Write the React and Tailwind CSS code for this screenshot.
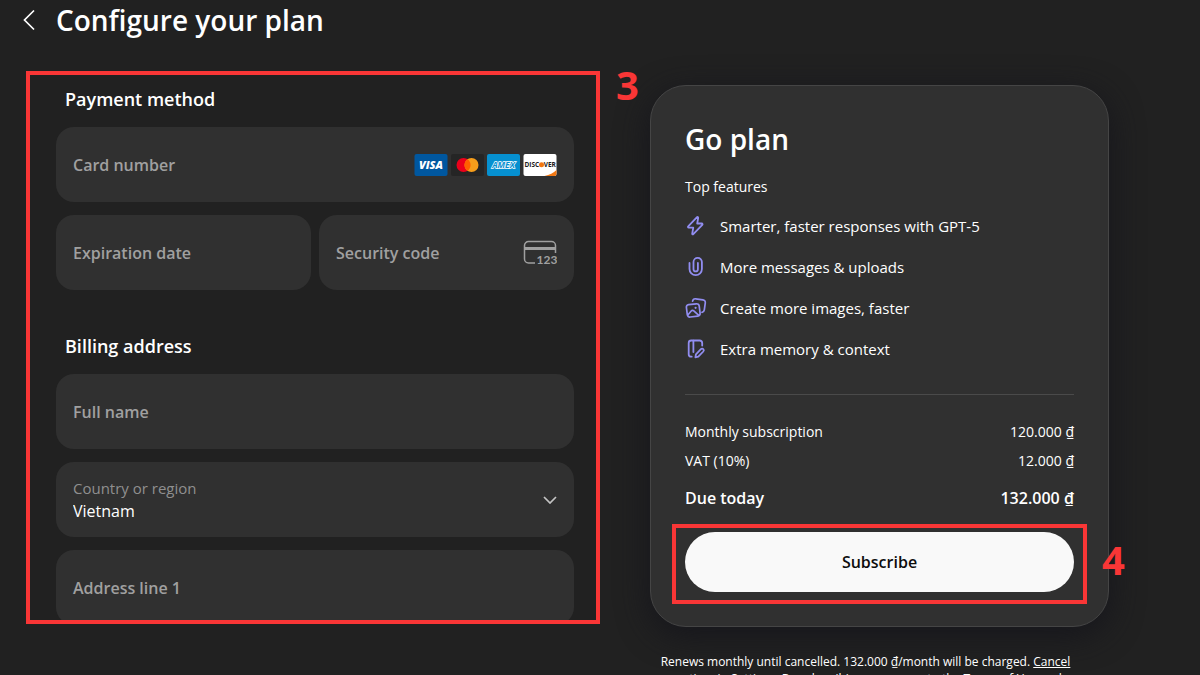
import { useState } from "react";

const features = [
  { icon: BoltIcon, text: "Smarter, faster responses with GPT-5" },
  { icon: ClipIcon, text: "More messages & uploads" },
  { icon: ImagesIcon, text: "Create more images, faster" },
  { icon: MemoryIcon, text: "Extra memory & context" },
];

function BoltIcon() {
  return (
    <svg viewBox="0 0 22 22" className="w-[22px] h-[22px]" fill="none" stroke="currentColor" strokeWidth="1.8" strokeLinejoin="round" strokeLinecap="round">
      <path d="M12 2.2 3.2 11.4c-.5.5-.2 1.3.5 1.3h4.6L7.2 18.6c-.1.7.6 1.1 1.1.6l9-9.4c.5-.5.2-1.3-.5-1.3h-4.6l1-5.700c.1-.8-.7-1.100-1.200-.6Z" />
    </svg>
  );
}

function ClipIcon() {
  return (
    <svg viewBox="0 0 22 22" className="w-[22px] h-[22px]" fill="none" stroke="currentColor" strokeWidth="1.8" strokeLinecap="round">
      <path d="M4.500 7v6a6.200 6.200 0 0 0 12.400 0V6a4.200 4.200 0 0 0-8.400 0v7.200a2.200 2.200 0 0 0 4.400 0V7" />
    </svg>
  );
}

function ImagesIcon() {
  return (
    <svg viewBox="0 0 22 22" className="w-[22px] h-[22px]" fill="none" stroke="currentColor" strokeWidth="1.7" strokeLinecap="round" strokeLinejoin="round">
      <path d="M7.600 4.200c.3-1.600 1.500-2.600 3.100-2.400l7.200 1c1.600.2 2.600 1.500 2.400 3.100l-1 7c-.2 1.400-1 2.300-2.300 2.500" />
      <path d="M3.600 7.700l7.700-.9c1.500-.2 2.700.7 2.900 2.200l.9 7.200c.2 1.500-.8 2.700-2.300 2.900l-7.600.9c-1.500.2-2.700-.8-2.900-2.300l-.9-7.200c-.2-1.500.7-2.600 2.200-2.800Z" />
      <path d="M2.800 18l3.400-4c.7-.8 1.800-.8 2.600-.1l4.700 4.300" />
      <circle cx="10.600" cy="10.800" r="1.100" fill="currentColor" stroke="none" />
    </svg>
  );
}

function MemoryIcon() {
  return (
    <svg viewBox="0 0 22 22" className="w-[22px] h-[22px]" fill="none" stroke="currentColor" strokeWidth="1.8" strokeLinecap="round" strokeLinejoin="round">
      <path d="M17.200 7.600V5c0-1.500-1-2.500-2.500-2.500H6.200C4.700 2.500 3.700 3.500 3.700 5v11.200c0 1.500 1 2.500 2.500 2.500h.5" />
      <path d="M8.400 2.600v11.500" />
      <path d="M10.400 19.300l.5-3 5-5.200c.7-.7 1.800-.7 2.400 0 .7.7.6 1.700 0 2.400l-5 5.200Z" />
    </svg>
  );
}

function CardBrands() {
  return (
    <div className="flex shrink-0 gap-[3px]">
      <svg viewBox="0 0 33 22" className="w-[34px] h-[22px]">
        <rect width="33" height="22" rx="2" fill="#00579f" />
        <text x="16.500" y="15" textAnchor="middle" fontFamily="Open Sans" fontSize="11" fontWeight="800" fontStyle="italic" fill="#fff">VISA</text>
      </svg>
      <svg viewBox="0 0 33 22" className="w-[33px] h-[22px]">
        <rect width="33" height="22" rx="2" fill="#252525" />
        <circle cx="12.500" cy="11" r="7" fill="#eb001b" />
        <circle cx="20.500" cy="11" r="7" fill="#f79e1b" />
        <path d="M16.500 5.200a7 7 0 0 1 0 11.600a7 7 0 0 1 0-11.600Z" fill="#ff5f00" />
      </svg>
      <svg viewBox="0 0 33 22" className="w-[33px] h-[22px]">
        <rect width="33" height="22" rx="2" fill="#0690d0" />
        <text x="16.500" y="14" textAnchor="middle" fontFamily="Open Sans" fontSize="8.500" fontWeight="700" fontStyle="italic" fill="#0690d0" stroke="#fff" strokeWidth="1.400" paintOrder="stroke">AMEX</text>
      </svg>
      <svg viewBox="0 0 33 22" className="w-[34px] h-[22px]">
        <rect width="33" height="22" rx="2" fill="#fff" />
        <path d="M33 16v4a2 2 0 0 1-2 2H21c5-1 9-3 12-6Z" fill="#f27712" />
        <text x="1" y="13" fontFamily="Open Sans" fontSize="6.500" fontWeight="700" fill="#1a1a1a">DISC</text>
        <circle cx="18" cy="10.700" r="2.500" fill="#f27712" />
        <text x="20.200" y="13" fontFamily="Open Sans" fontSize="6.500" fontWeight="700" fill="#1a1a1a">VER</text>
      </svg>
    </div>
  );
}

function SecurityCodeIcon() {
  return (
    <svg viewBox="0 0 34 26" className="w-[34px] h-[26px] shrink-0 text-[#a0a0a0]" fill="none" stroke="currentColor" strokeWidth="1.500">
      <path d="M12 23H5.500A4 4 0 0 1 1.500 19V5.500A4 4 0 0 1 5.500 1.500H28.500A4 4 0 0 1 32.500 5.500V13" />
      <path d="M1.500 8.500H32.500" strokeWidth="3" />
      <text x="13.500" y="23.500" fontFamily="Lato" fontSize="12" fontWeight="700" fill="currentColor" stroke="none">123</text>
    </svg>
  );
}

function Field({ label, children }) {
  return (
    <label className="flex h-[75px] min-w-0 items-center gap-3 rounded-[18px] bg-[#303030] px-[17px]">
      <span className="shrink-0 text-[16px] leading-6 font-semibold text-[#a0a0a0]">
        {label}
      </span>
      <input
        type="text"
        className="w-0 min-w-0 flex-1 bg-transparent text-[16px] text-white outline-none"
      />
      {children}
    </label>
  );
}

export default function App() {
  const [country, setCountry] = useState("Vietnam");

  return (
    <div className="h-screen overflow-hidden bg-[#212121] font-['Open_Sans',sans-serif] text-white">
      <header className="flex h-10 items-center gap-4 pl-[18px]">
        <button type="button" aria-label="Back" className="flex w-[22px] justify-center">
          <svg viewBox="0 0 12 22" className="h-[22px] w-3" fill="none" stroke="currentColor" strokeWidth="1.700">
            <path d="M11 1.500 1.500 11l9.500 9.500" />
          </svg>
        </button>
        <h1 className="text-[28px] leading-10 font-semibold">Configure your plan</h1>
      </header>

      <main className="mt-[31px] grid grid-cols-[574fr_459fr] items-start gap-[50px] pr-[91px] pl-[26px]">
        {/* Payment form */}
        <div className="relative">
          <form className="overflow-hidden border-4 border-[#f93636] pr-[22px] pl-[26px]">
            <section>
              <h2 className="px-[9px] pt-3 pb-4 text-[18px] leading-6 font-semibold">
                Payment method
              </h2>
              <div className="grid grid-cols-2 gap-x-2 gap-y-[13px]">
                <div className="col-span-2">
                  <Field label="Card number">
                    <CardBrands />
                  </Field>
                </div>
                <Field label="Expiration date" />
                <Field label="Security code">
                  <SecurityCodeIcon />
                </Field>
              </div>
            </section>

            <section className="-mb-[5px] pt-8">
              <h2 className="px-[9px] pt-3 pb-4 text-[18px] leading-6 font-semibold">
                Billing address
              </h2>
              <div className="flex flex-col gap-[13px]">
                <Field label="Full name" />
                <div className="relative flex h-[75px] flex-col justify-center rounded-[18px] bg-[#303030] px-[17px]">
                  <label htmlFor="country" className="text-[15px] leading-[22px] text-[#8f8f8f]">
                    Country or region
                  </label>
                  <select
                    id="country"
                    value={country}
                    onChange={(e) => setCountry(e.target.value)}
                    className="appearance-none bg-transparent text-[16px] leading-6 outline-none"
                  >
                    <option>Vietnam</option>
                  </select>
                  <svg viewBox="0 0 14 8" className="pointer-events-none absolute top-[34px] right-[17px] h-2 w-[14px]" fill="none" stroke="#c4c4c4" strokeWidth="1.700">
                    <path d="M1 1l6 6 6-6" />
                  </svg>
                </div>
                <Field label="Address line 1" />
              </div>
            </section>
          </form>
          <span className="absolute -top-[10px] left-full pl-4 text-[40px] leading-[48px] font-bold text-[#f93636]">
            3
          </span>
        </div>

        {/* Plan summary */}
        <aside className="mt-[14px]">
          <div className="rounded-[36px] border border-[#454545] bg-[#303030] px-[34px] pt-[33px] pb-[34px] shadow-[0_8px_32px_#16161c]">
            <h2 className="text-[28px] leading-10 font-semibold">Go plan</h2>
            <h3 className="mt-4 text-[14px] leading-6">Top features</h3>
            <ul className="mt-[15px] flex flex-col gap-[17px]">
              {features.map(({ icon: Icon, text }) => (
                <li key={text} className="flex items-center gap-[13px] text-[15px] leading-6">
                  <span className="text-[#918df0]">
                    <Icon />
                  </span>
                  {text}
                </li>
              ))}
            </ul>

            <dl className="mt-[33px] grid grid-cols-[1fr_auto] gap-y-[5px] border-t border-[#4a4a4a] pt-[25px] text-[14px] leading-6">
              <dt>Monthly subscription</dt>
              <dd className="text-right">120.000 ₫</dd>
              <dt>VAT (10%)</dt>
              <dd className="text-right">12.000 ₫</dd>
              <dt className="mt-2 text-[16px] font-semibold">Due today</dt>
              <dd className="mt-2 text-right text-[16px] font-semibold">132.000 ₫</dd>
            </dl>

            <div className="relative mt-[22px]">
              <button
                type="button"
                className="h-[60px] w-full rounded-full bg-[#f9f9f9] text-[16px] font-semibold text-[#0d0d0d]"
              >
                Subscribe
              </button>
              <div className="pointer-events-none absolute -inset-x-[13px] -top-2 -bottom-3 border-4 border-[#f93636]" />
              <span className="absolute top-1 left-full pl-7 text-[40px] leading-[48px] font-bold text-[#f93636]">
                4
              </span>
            </div>
          </div>

          <p className="mt-[26px] pr-7 text-center text-[12px] leading-[17px]">
            Renews monthly until cancelled. 132.000 ₫/month will be charged.{" "}
            <a href="#cancel" className="underline">Cancel</a>
            <br />
            anytime in Settings. By subscribing, you agree to the{" "}
            <a href="#terms" className="underline">Terms of Use</a> and
          </p>
        </aside>
      </main>
    </div>
  );
}
